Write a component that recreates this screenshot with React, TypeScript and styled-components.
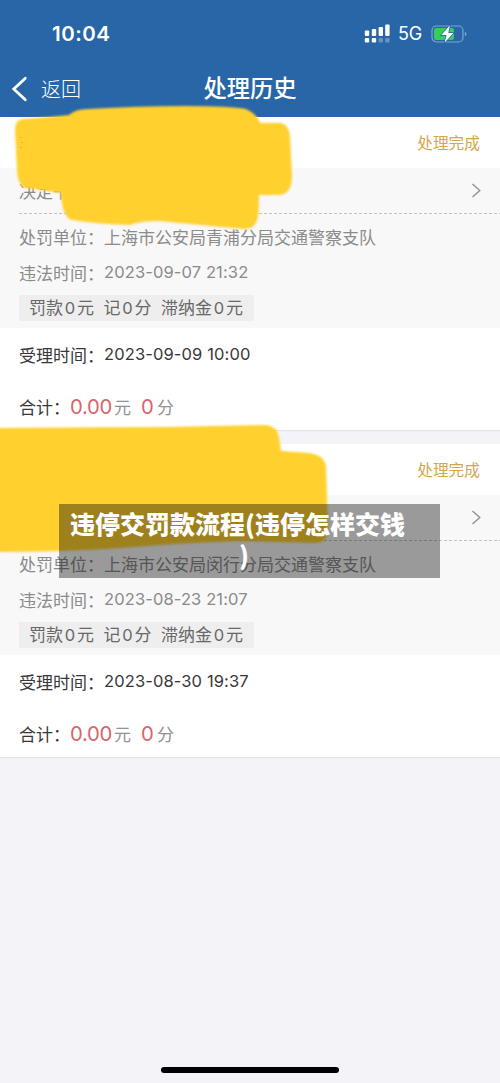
import React from "react";
import styled, { createGlobalStyle } from "styled-components";

const Global = createGlobalStyle`
  * { box-sizing: border-box; }
  body { margin: 0; background: #f3f3f8; }
`;

const Screen = styled.div`
  position: relative;
  display: flex;
  flex-direction: column;
  width: 500px;
  height: 1083px;
  overflow: hidden;
  background: #f3f3f8;
  font-family: Inter, "Noto Sans CJK SC", sans-serif;
  font-size: 17px;
  white-space: nowrap;
`;

const Header = styled.header`
  height: 117px;
  flex: none;
  background: #2866a8;
  color: #fff;
`;

const StatusBar = styled.div`
  display: flex;
  align-items: center;
  justify-content: space-between;
  height: 60px;
  padding: 7px 33px 0 52px;
`;

const Clock = styled.span`
  font-size: 20.5px;
  font-weight: 600;
  letter-spacing: 0.5px;
`;

const StatusIcons = styled.div`
  display: flex;
  align-items: center;
  svg { flex: none; }
`;

const Network = styled.span`
  width: 41px;
  padding-left: 8px;
  font-size: 18px;
  letter-spacing: -0.2px;
`;

const NavBar = styled.nav`
  display: grid;
  grid-template-columns: 150px 200px 150px;
  align-items: center;
  height: 57px;
`;

const Back = styled.div`
  display: flex;
  align-items: center;
  gap: 13px;
  padding-left: 11px;
  font-size: 20px;
  font-weight: 300;
`;

const Title = styled.h1`
  margin: 0;
  text-align: center;
  font-size: 23.3px;
  line-height: 34px;
  font-weight: 500;
`;

const Card = styled.section`
  height: 313px;
  flex: none;
  margin-bottom: 14px;
  background: #fff;
  box-shadow: 0 1px 1px #e4e4e8;
`;

const CardTop = styled.div`
  display: flex;
  align-items: center;
  justify-content: space-between;
  height: 51px;
  padding: 0 20px;
  font-size: 15.7px;
  color: #d5a54b;
`;

const Details = styled.div`
  height: 160px;
  padding-left: 19px;
  background: #f8f8f8;
  color: #8b8b8b;
`;

const Decision = styled.div`
  display: flex;
  align-items: center;
  justify-content: space-between;
  height: 45px;
  padding-right: 18px;
`;

const Dashes = styled.div`
  height: 1px;
  background: repeating-linear-gradient(90deg, #c2c2c2 0 3px, transparent 3px 5px);
`;

const Line = styled.div<{ $h: number; $dark?: boolean }>`
  display: flex;
  align-items: center;
  height: ${(p) => p.$h}px;
  color: ${(p) => (p.$dark ? "#383838" : "inherit")};
`;

const Label = styled.span`
  width: 85px;
`;

const Digits = styled.span`
  font-size: 16.5px;
  letter-spacing: 0.12px;
`;

const Tag = styled.div`
  display: flex;
  align-items: center;
  gap: 9.5px;
  width: 235px;
  height: 26px;
  margin-top: 10px;
  padding: 0 0 3px 10px;
  background: #eee;
  color: #686868;
`;

const Zero = styled.span`
  display: inline-block;
  width: 14px;
  text-align: center;
  font-size: 16.5px;
`;

const Summary = styled.div`
  padding-left: 19px;
`;

const Total = styled.div`
  display: flex;
  align-items: baseline;
  height: 50px;
  line-height: 53px;
  color: #383838;
`;

const TotalLabel = styled.span`
  width: 51px;
`;

const Amount = styled.span<{ $w: number }>`
  width: ${(p) => p.$w}px;
  font-size: 20.3px;
  letter-spacing: -0.3px;
  color: #d9646b;
`;

const Unit = styled.span`
  width: 28px;
  padding-left: 1px;
  color: #929292;
`;

const Scribble = styled.svg`
  position: absolute;
  left: 0;
  top: 0;
`;

const Caption = styled.div`
  position: absolute;
  left: 59px;
  top: 504px;
  width: 381px;
  height: 74px;
  padding: 4px 11px 0;
  background: rgba(0, 0, 0, 0.38);
  color: #fff;
  font-family: "Noto Sans CJK SC", sans-serif;
  font-size: 25px;
  font-weight: 900;
  line-height: 31px;
`;

const CaptionEnd = styled.div`
  padding-left: 169px;
`;

const HomeIndicator = styled.div`
  width: 178px;
  height: 6px;
  margin: auto auto 10.5px 161px;
  border-radius: 3px;
  background: #000;
`;

const Signal = () => (
  <svg width="26" height="19" viewBox="0 0 26 19" fill="#fff">
    <rect x="0.8" y="6.5" width="4.4" height="5.5" rx="1" />
    <rect x="7.8" y="5" width="4.4" height="7" rx="1" />
    <rect x="14.6" y="3" width="4.4" height="9" rx="1" />
    <rect x="21.2" y="0.6" width="4.4" height="11.4" rx="1" />
    <rect x="0.8" y="14" width="4.4" height="4.4" rx="1" />
    <rect x="7.8" y="14" width="4.4" height="4.4" rx="1" />
    <rect x="14.6" y="14" width="4.4" height="4.4" rx="1" opacity="0.3" />
    <rect x="21.2" y="14" width="4.4" height="4.4" rx="1" opacity="0.3" />
  </svg>
);

const Battery = () => (
  <svg width="36" height="20" viewBox="0 0 36 20">
    <rect x="1" y="2" width="31" height="16" rx="4.5" fill="none" stroke="#7ea6d0" strokeWidth="1.2" />
    <path d="M33.8 7.8q1.8.7 1.8 2.2t-1.8 2.2z" fill="#7ea6d0" />
    <rect x="3" y="4" width="20" height="12" rx="2.5" fill="#35cd5c" />
    <path
      d="M18.8 1.5 10.3 11h5.2l-1.8 7.5L22.5 9h-5.2z"
      fill="#fff"
      stroke="#2866a8"
      strokeWidth="1.4"
      paintOrder="stroke"
    />
  </svg>
);

const Chevron = () => (
  <svg width="11" height="17" viewBox="0 0 11 17" fill="none" stroke="#929292" strokeWidth="1.4">
    <path d="m1.5 2 7.3 6.5L1.5 15" />
  </svg>
);

interface RecordProps {
  heading?: string;
  decision?: string;
  unit: string;
  offence: string;
  accepted: string;
}

const RecordCard = ({ heading, decision, unit, offence, accepted }: RecordProps) => (
  <Card>
    <CardTop>
      <span>{heading}</span>
      <span>处理完成</span>
    </CardTop>
    <Details>
      <Decision>
        <span>{decision}</span>
        <Chevron />
      </Decision>
      <Dashes />
      <Line $h={45}>
        <Label>处罚单位：</Label>
        <span>{unit}</span>
      </Line>
      <Line $h={26}>
        <Label>违法时间：</Label>
        <Digits>{offence}</Digits>
      </Line>
      <Tag>
        <span>罚款<Zero>0</Zero>元</span>
        <span>记<Zero>0</Zero>分</span>
        <span>滞纳金<Zero>0</Zero>元</span>
      </Tag>
    </Details>
    <Summary>
      <Line $h={52} $dark>
        <Label>受理时间：</Label>
        <Digits>{accepted}</Digits>
      </Line>
      <Total>
        <TotalLabel>合计：</TotalLabel>
        <Amount $w={43}>0.00</Amount>
        <Unit>元</Unit>
        <Amount $w={15}>0</Amount>
        <Unit>分</Unit>
      </Total>
    </Summary>
  </Card>
);

export default function App() {
  return (
    <Screen>
      <Global />
      <Header>
        <StatusBar>
          <Clock>10:04</Clock>
          <StatusIcons>
            <Signal />
            <Network>5G</Network>
            <Battery />
          </StatusIcons>
        </StatusBar>
        <NavBar>
          <Back>
            <svg width="17" height="26" viewBox="0 0 17 26" fill="none" stroke="#fff" strokeWidth="2.8" strokeLinecap="round">
              <path d="M14.3 2.2 2.8 13l11.5 10.8" />
            </svg>
            返回
          </Back>
          <Title>处理历史</Title>
        </NavBar>
      </Header>
      <RecordCard
        heading="违"
        decision="决定书"
        unit="上海市公安局青浦分局交通警察支队"
        offence="2023-09-07 21:32"
        accepted="2023-09-09 10:00"
      />
      <RecordCard
        unit="上海市公安局闵行分局交通警察支队"
        offence="2023-08-23 21:07"
        accepted="2023-08-30 19:37"
      />
      <Scribble width="500" height="600" viewBox="0 0 500 600">
        <defs>
          <filter id="soft" x="-5%" y="-5%" width="110%" height="110%">
            <feGaussianBlur stdDeviation="1.1" />
          </filter>
        </defs>
        <g fill="#ffd02f" filter="url(#soft)">
          <path d="M24 119Q50 117 69 115Q75 109 88 109Q140 106 185 106Q230 106 246 109Q257 114 260 123L281 123Q289 125 290 136L292 176Q292 195 278 195L259 195Q259 207 258 217Q255 230 244 229Q190 224 160 221Q139 221 130 225Q95 224 72 220Q62 217 61 193Q45 190 26 188Q18 186 17 170L15 130Q15 119 24 119Z" />
          <path d="M-8 428Q100 427 165 427L266 425Q277 426 279 437L281 451L309 453Q325 455 326 467L328 528Q328 543 315 543L238 541Q180 543 120 548Q60 552-8 552Z" />
        </g>
        <path d="M21 137v1m1 4v1m-1 4v1" stroke="#d9a92c" strokeWidth="1.2" />
      </Scribble>
      <Caption>
        <div>违停交罚款流程(违停怎样交钱</div>
        <CaptionEnd>)</CaptionEnd>
      </Caption>
      <HomeIndicator />
    </Screen>
  );
}
